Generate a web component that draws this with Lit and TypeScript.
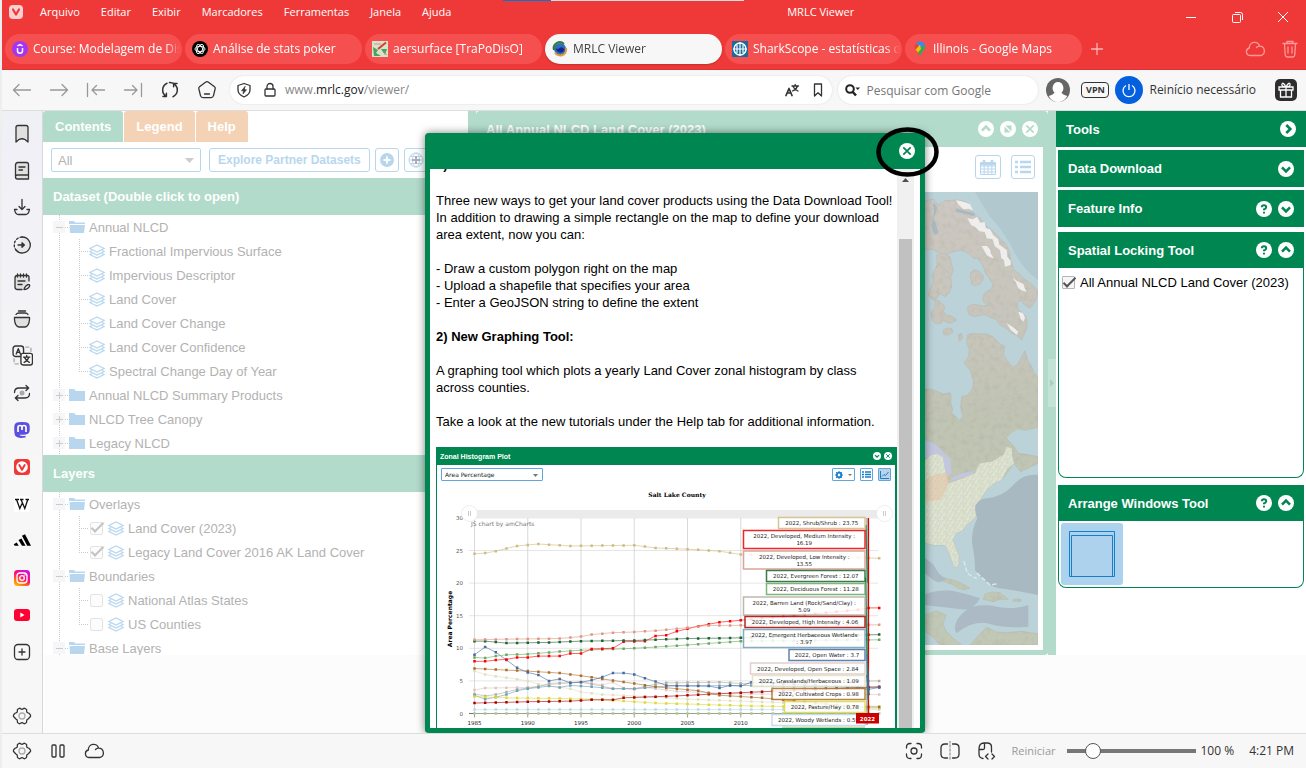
import { LitElement, html, svg, css } from "lit";
import { customElement, property } from "lit/decorators.js";
import { classMap } from "lit/directives/class-map.js";

const stroke = (body: unknown, size = 20, box = 20) => html`<svg
  width=${size} height=${size} viewBox="0 0 ${box} ${box}" fill="none"
  stroke="currentColor" stroke-width="1.3" stroke-linecap="round"
  stroke-linejoin="round" aria-hidden="true">${body}</svg>`;

const gear = svg`<path d="M7 2.500q1-.6 1.700.3Q10 4 11.300 2.800 12 1.900 13 2.500l1.200.8q.8.6.4 1.600-.3 1.600 1.400 2 1.200.1 1.600 1l.9 1.300q.4.800-.3 1.500Q17 12 16 13.100q-1.600.4-1.400 2 .4 1-.4 1.600l-1.200.8q-1 .6-1.700-.3-1.300-1.200-2.600 0-.7.900-1.700.3l-1.200-.8q-.8-.6-.4-1.600.2-1.600-1.400-2Q3 12 1.800 10.700q-.7-.7-.3-1.500l.9-1.300q.4-.9 1.600-1 1.700-.4 1.400-2-.4-1 .4-1.600z"/><circle cx="10" cy="10" r="3" stroke="#aaa"/>`;
const cloud = svg`<path d="M5 16.500a3.800 3.800 0 0 1-.6-7.500A5.200 5.200 0 0 1 14.600 7.200a4.700 4.700 0 0 1 1 9.300zM11.500 8.500a4 4 0 0 1 3-1.300" />`;

const railIcons: Array<[string, unknown]> = [
  ["Favoritos", stroke(svg`<path fill="#e0e0e0" d="M4 3.500Q4 1.500 6 1.500h8q2 0 2 2V18l-3-2.500q-3-1.500-6 0L4 18z"/>`)],
  ["Lista de leitura", stroke(svg`<path fill="#e0e0e0" d="M3.500 15.500V4q0-2.500 2.500-2.500h8.500q2 0 2 2V14H5.500a1.700 1.700 0 0 0 0 4h11V14M7 6h6M7 9h3.500"/>`)],
  ["Downloads", stroke(svg`<path d="M10 1.500V11M7 8.500l3 3 3-3M2.500 11.500c.5 3 2 5 4 5h7c2 0 3.500-2 4-5H15M2.500 11.500H5"/>`)],
  ["Histórico", stroke(svg`<path fill="#e8e8e8" d="M10 2a8 8 0 1 1-6 13"/><path stroke-dasharray="2 2" d="M10 2a8 8 0 0 0-6 13"/><path d="M6 10h6M10 7.800l2.400 2.200-2.400 2.200z" fill="currentColor"/>`)],
  ["Anotações", stroke(svg`<path fill="#e0e0e0" d="M17 9V5q0-1.500-1.500-1.500h-10Q3 3.500 3 6v9q0 2.500 2.500 2.500H10"/><path d="M5.500 2v3M8.500 2v3M11.500 2v3M14.500 2v3M6 9h7M6 12.500h4M12 17.500c0-2 3-5 4.500-5s1.800 1.500 0 3.200-4.500 1.800-4.500 1.800"/>`)],
  ["Sessões", stroke(svg`<path fill="#e0e0e0" d="M2.500 8.500h15v2q-.5 7-4.500 7.500H7q-4-.5-4.500-7.500z"/><path d="M4 5.500q1-1.500 3-1.500h6q2 0 3 1.500M6.500 2h7"/>`)],
  ["Tradutor", stroke(svg`<rect x="1" y="1" width="10" height="10" rx="2.500"/><path d="M4 8.500 6 3.500l2 5M4.700 7h2.600"/><path fill="#f7f7f7" d="M10.500 8h7a2 2 0 0 1 2 2v7a2 2 0 0 1-2 2h-7a2 2 0 0 1-2-2v-7q0-2 2-2z"/><path d="M11 11.500h6M14 10v1.500M16 11.500q-1 3.500-4.500 5M12 12q1.500 3 4.500 4.500"/><path stroke="#aaa" stroke-dasharray="3 3" d="M13 2h5v4M2 13v5h5"/>`, 21)],
  ["Sincronizar", stroke(svg`<path d="M2.500 9.500Q2.500 5 7 5h9.500M14 2.500 16.700 5 14 7.500M17.500 10.500q0 4.500-4.500 4.500H3.500M6 12.500 3.300 15 6 17.500"/><circle cx="10" cy="10" r="2.500" fill="#aaa" stroke="none"/>`)],
  ["Mastodon", html`<svg width="16" height="16" viewBox="0 0 16 16" aria-hidden="true"><path fill="#5b4fe0" d="M4 .3q4-.6 8 0 3.500.7 3.700 4v4q-.3 3.700-4 4.200-3.600.5-6-.1.200 2.200 5.800 1.400v1.600q-8 1.600-10.500-2Q0 11 .3 4.300.6 1 4 .3z"/><path fill="none" stroke="#fff" stroke-width="1.700" d="M4 10V5.500Q4 3.500 6 3.500t2 2V8M8 5.500q0-2 2-2t2 2V10"/></svg>`],
  ["Vivaldi", html`<svg width="16" height="16" viewBox="0 0 16 16" aria-hidden="true"><rect width="16" height="16" rx="3.500" fill="#ef3939"/><circle cx="8" cy="8" r="5.800" fill="#fff"/><path d="M5.300 6 8 10.700 10.700 6" fill="none" stroke="#ef3939" stroke-width="2" stroke-linecap="round" stroke-linejoin="round"/></svg>`],
  ["Wikipedia", html`<svg width="16" height="16" viewBox="0 0 16 16" aria-hidden="true"><rect width="16" height="16" rx="2" fill="#fff"/><path d="M1 3.500h4M6 3.500h3.500M11.500 3.500h3.500M2.500 3.500l3.300 9L8 7.500M7 3.500l3.800 9L13.800 3.500" fill="none" stroke="#111" stroke-width="1.300"/></svg>`],
  ["Adidas", html`<svg width="18" height="14" viewBox="0 0 18 14" aria-hidden="true"><path d="m9 1.800 3-1.600 6 11.500h-3.800zM5.500 6l3-1.500 4 7.200H9zM.8 10.200 3.700 8.500l2 3.200H1.700z"/></svg>`],
  ["Instagram", html`<svg width="16" height="16" viewBox="0 0 16 16" aria-hidden="true"><defs><linearGradient id="ig" x1=".1" y1="1" x2=".7" y2="0"><stop stop-color="#ffc400"/><stop offset=".3" stop-color="#ff6a1a"/><stop offset=".6" stop-color="#ff0a78"/><stop offset="1" stop-color="#c913e0"/></linearGradient></defs><rect width="16" height="16" rx="3.500" fill="url(#ig)"/><rect x="3" y="3" width="10" height="10" rx="3" fill="none" stroke="#fff" stroke-width="1.300"/><circle cx="8" cy="8" r="2.300" fill="none" stroke="#fff" stroke-width="1.300"/><circle cx="11" cy="5" r=".8" fill="#fff"/></svg>`],
  ["YouTube", html`<svg width="16" height="12" viewBox="0 0 16 12" aria-hidden="true"><rect width="16" height="12" rx="3" fill="#ff0033"/><path d="M6.300 3.500v5L10.500 6z" fill="#fff"/></svg>`],
  ["Adicionar painel", stroke(svg`<rect x="2.500" y="2.500" width="15" height="15" rx="3.500"/><path d="M10 7v6M7 10h6"/>`)],
];

interface Tab { title: string; icon: unknown; active?: boolean }
const tabs: Tab[] = [
  { title: "Course: Modelagem de Disp", icon: svg`<circle cx="8" cy="8" r="8" fill="#a435f0"/><path d="M5.500 7v3q0 2.200 2.500 2.200t2.500-2.200V7M5.500 4.800 8 3.500l2.500 1.300" fill="none" stroke="#fff" stroke-width="1.500"/>` },
  { title: "Análise de stats poker", icon: svg`<circle cx="8" cy="8" r="8"/><g fill="none" stroke="#fff" stroke-width=".9"><ellipse cx="8" cy="8" rx="5" ry="2.600"/><ellipse cx="8" cy="8" rx="5" ry="2.600" transform="rotate(60 8 8)"/><ellipse cx="8" cy="8" rx="5" ry="2.600" transform="rotate(120 8 8)"/></g>` },
  { title: "aersurface [TraPoDisO]", icon: svg`<rect width="16" height="16" fill="#d9e2c8"/><path d="M1 6 6 9l-2 3 5 3H2zM9 8h6l-2 6z" fill="#49a260"/><path d="M2 3h7M11 11l4 3" stroke="#b99" /><path d="M6 8 14 1.500" stroke="#d3402e" stroke-width="2"/>` },
  { title: "MRLC Viewer", active: true, icon: svg`<circle cx="8" cy="8" r="6" fill="#2e6fc0"/><path d="M3.500 7q2 2 4 0t5 1q-1 4-4.500 3.500T3.500 7z" fill="#14288c"/><path d="M2 9a6 6 0 0 1 10-6" fill="none" stroke="#2f7d3a" stroke-width="2"/><path d="M14 7a6 6 0 0 1-11 4.500" fill="none" stroke="#e29a3c" stroke-width="2"/>` },
  { title: "SharkScope - estatísticas de", icon: svg`<rect width="16" height="16" fill="#176b9e"/><circle cx="8" cy="8" r="6" fill="none" stroke="#fff" stroke-width="1.500"/><path d="M8 1v14M1 8h14M5 4v8M11 4v8" stroke="#fff" stroke-width="1.200"/>` },
  { title: "Illinois - Google Maps", icon: svg`<path d="M8 .5a5.200 5.200 0 0 1 5.200 5.200C13.200 9.500 9 10.500 8 15.500 7 10.500 2.800 9.500 2.800 5.700A5.200 5.200 0 0 1 8 .5z" fill="#34a853"/><path d="M8 .5a5.200 5.200 0 0 1 5 3.700L8 6 4 2.400A5 5 0 0 1 8 .5z" fill="#4285f4"/><path d="M4 2.400 7 5 4 9Q1.500 5.500 4 2.400z" fill="#ea4335"/><path d="M3.600 8.500 8 3.800 9 8l-3 3.500z" fill="#fbbc04"/>` },
];

type Glyph = "up" | "down" | "right" | "close" | "help" | "resize";
const glyphs: Record<Glyph, unknown> = {
  up: svg`<path d="m4 9.700 4-4 4 4"/>`,
  down: svg`<path d="m4 6.300 4 4 4-4"/>`,
  right: svg`<path d="m6.300 4 4 4-4 4"/>`,
  close: svg`<path stroke-width="1.700" d="m4.300 4.300 7.400 7.400M11.700 4.300l-7.400 7.400"/>`,
  help: svg`<path stroke-width="2" d="M5.800 6.300q0-2 2.200-2t2.200 1.900Q10.200 7.500 8 8.500v.8M8 10.800v1.700"/>`,
  resize: svg`<path stroke="none" fill="currentColor" d="M4.500 5.500v6h6zM11.500 10.500v-6h-6z"/>`,
};
const round = (g: Glyph, label: string) => html`<button class="round" aria-label=${label}>
  <svg viewBox="0 0 16 16" aria-hidden="true"><circle cx="8" cy="8" r="8" fill="#fff"/><g fill="none" stroke="currentColor" stroke-width="2.600">${glyphs[g]}</g></svg></button>`;

const roundStyle = css`
  button { font: inherit; color: inherit; background: none; border: 0; padding: 0; margin: 0; }
  .round { width: 16px; height: 16px; color: var(--glyph, #008751); display: block; flex: none; }
  .round svg { display: block; width: 100%; height: 100%; }
`;

/* ---------- Zonal histogram ---------- */

const FIRST = 1985;
const LAST = 2023;
const px = (year: number) => 77 + (year - FIRST) * 21.3;
const py = (v: number) => 497 - v * 13.04;

const series: Array<[string, Array<[number, number]>]> = [
  ["#b5c58f", [[1985, 0], [2023, 0]]],
  ["#b8d9eb", [[1985, 0.6], [2023, 0.6]]],
  ["#dfdfc2", [[1985, 6.5], [1986, 6], [1987, 5.7], [1988, 5.5], [1990, 5], [1991, 4.5], [1994, 3.8], [1995, 3.3], [1997, 2.9], [2000, 2.7], [2005, 2.2], [2010, 1.9], [2023, 1.1]]],
  ["#dec5c5", [[1985, 3.6], [1986, 3.9], [1990, 4], [1992, 4.4], [1995, 4.9], [1997, 4.4], [1998, 4.8], [1999, 3.9], [2000, 3.7], [2001, 4], [2004, 3.4], [2010, 3], [2023, 2.9]]],
  ["#b3ac9f", [[1985, 3], [1986, 2.7], [1987, 2.9], [1989, 3.7], [1991, 4.1], [1992, 4.6], [1995, 4.8], [1997, 4.2], [1998, 3.8], [2000, 3.8], [2002, 4.5], [2003, 4.7], [2008, 4.8], [2010, 4.6], [2023, 5]]],
  ["#6c9fb8", [[1985, 2.8], [1986, 2.2], [1987, 2.5], [1988, 2.9], [1989, 3.5], [1990, 3.8], [1992, 4.2], [1993, 4], [1994, 4.3], [1996, 4.1], [1998, 3.8], [2000, 3.8], [2003, 4.2], [2010, 4.3], [2023, 4]]],
  ["#dcd939", [[1985, 2.6], [1988, 2.4], [1993, 2.3], [1996, 2.2], [1998, 2], [2000, 1.8], [2002, 1.6], [2004, 1.5], [2010, 1.2], [2023, 0.8]]],
  ["#ab0000", [[1985, 1.6], [1990, 1.8], [1994, 1.9], [1996, 2.1], [1998, 2.1], [1999, 2.4], [2004, 2.7], [2010, 3.2], [2023, 4.1]]],
  ["#ab6c28", [[1985, 6.9], [1990, 6.5], [1993, 6.2], [1995, 5.8], [1997, 5.3], [2000, 4.6], [2002, 4.1], [2004, 3.8], [2006, 3.5], [2008, 2.8], [2010, 2.6], [2012, 2.4], [2021, 1], [2023, 1]]],
  ["#466b9f", [[1985, 9], [1986, 10.2], [1987, 9.4], [1988, 8.2], [1989, 7], [1990, 6.3], [1991, 5.9], [1992, 5], [1993, 5.3], [1994, 4.7], [1995, 4.8], [1996, 5.1], [1997, 5.6], [1998, 6.2], [1999, 6.2], [2000, 6], [2001, 5.4], [2002, 4.9], [2003, 4.3], [2007, 4.2], [2008, 3.9], [2009, 4.3], [2010, 4.2], [2011, 4.8], [2021, 4], [2022, 3.7], [2023, 4]]],
  ["#68aa63", [[1985, 8.6], [1986, 8.5], [1987, 8.8], [1988, 9], [1990, 9.1], [1993, 9.5], [1995, 9.7], [2000, 10], [2004, 10.4], [2010, 11.1], [2023, 11.3]]],
  ["#ff0000", [[1985, 8], [1986, 8], [1987, 8.2], [1988, 8.3], [1989, 8.6], [1990, 8.6], [1991, 8.8], [1993, 8.8], [1994, 9.2], [1995, 9.2], [1996, 9.9], [1998, 10], [1999, 11], [2001, 11.1], [2002, 11.9], [2003, 12], [2004, 12.6], [2005, 13], [2006, 13.4], [2008, 14], [2010, 14.3], [2021, 15.9], [2022, 16.2], [2023, 16.2]]],
  ["#1c6330", [[1985, 11.1], [1986, 11.1], [1988, 10.8], [1992, 10.9], [1995, 11.1], [2000, 11.2], [2005, 11.5], [2010, 11.6], [2023, 12.1]]],
  ["#dd9787", [[1985, 11.3], [1988, 11.4], [1993, 11.5], [1995, 11.8], [1996, 12.1], [1998, 12.4], [2000, 12.5], [2002, 12.7], [2004, 13], [2007, 13.5], [2023, 13.6]]],
  ["#d1bb82", [[1985, 24.5], [1986, 24.6], [1987, 24.9], [1988, 25.3], [1989, 25.7], [1991, 26], [1994, 25.7], [2000, 25.8], [2002, 25.4], [2005, 25.2], [2008, 24.9], [2010, 24.4], [2023, 23.8]]],
];

const sample = (keys: Array<[number, number]>) => {
  const out: Array<[number, number]> = [];
  for (let year = FIRST; year <= LAST; year++) {
    const i = Math.max(1, keys.findIndex(([k]) => k >= year));
    const [x0, y0] = keys[i - 1];
    const [x1, y1] = keys[i];
    out.push([px(year), py(y0 + ((y1 - y0) * (year - x0)) / (x1 - x0))]);
  }
  return out;
};

/* colour, left edge, top edge, lines of text */
const balloons: Array<[string, number, number, string[]]> = [
  ["#d1bb82", 685, 105, ["2022, Shrub/Shrub : 23.75"]],
  ["#eb0000", 615, 131, ["2022, Developed, Medium Intensity :", "16.19"]],
  ["#d99282", 615, 172, ["2022, Developed, Low Intensity :", "13.55"]],
  ["#1c6330", 661, 211, ["2022, Evergreen Forest : 12.07"]],
  ["#68aa63", 661, 237, ["2022, Deciduous Forest : 11.28"]],
  ["#b3ac9f", 615, 264, ["2022, Barren Land (Rock/Sand/Clay) :", "5.09"]],
  ["#ab0000", 618, 303, ["2022, Developed, High Intensity : 4.06"]],
  ["#6c9fb8", 615, 329, ["2022, Emergent Herbaceous Wetlands", ": 3.97"]],
  ["#466b9f", 706, 369, ["2022, Open Water : 3.7"]],
  ["#dec5c5", 629, 396, ["2022, Developed, Open Space : 2.84"]],
  ["#dfdfc2", 633, 421, ["2022, Grasslands/Herbaceous : 1.09"]],
  ["#ab6c28", 672, 447, ["2022, Cultivated Crops : 0.98"]],
  ["#dcd939", 697, 473, ["2022, Pasture/Hay : 0.78"]],
  ["#b8d9eb", 672, 499, ["2022, Woody Wetlands : 0.59"]],
];

@customElement("zonal-plot")
export class ZonalPlot extends LitElement {
  static styles = [roundStyle, css`
    :host { display: block; background: #fff; border: solid #008751; border-width: 0 2px 0 1px; font: 7px "Liberation Sans", Arial, sans-serif; }
    .head { display: flex; align-items: center; gap: 3px; height: 18px; padding: 0 3px; background: #008751; color: #fff; font-weight: 700; }
    .head span { flex: 1; }
    .head .round { width: 8px; height: 8px; }
    .bar { display: flex; align-items: center; gap: 5px; padding: 3px 4px; }
    .pick { position: relative; display: flex; margin-right: auto; }
    .pick select { appearance: none; width: 102px; height: 13px; border: 1px solid #5fa6dc; border-radius: 1px; background: #fff; padding: 0 3px; font: 6px "DejaVu Sans", sans-serif; color: #222; }
    .pick svg { position: absolute; right: 5px; top: 6px; }
    .tool { height: 13px; width: 13px; border: 1px solid #5fa6dc; border-radius: 1px; display: flex; align-items: center; justify-content: center; gap: 5px; color: #157fcc; }
    .wide { width: 23px; }
    .on { background: #bcd3e6; }
    .plot { display: block; width: 100%; height: auto; font: 11px "DejaVu Sans", sans-serif; }
    .plot .name { font-weight: 700; font-size: 12px; }
    .plot .title { font-weight: 700; font-size: 12px; font-family: "DejaVu Serif", serif; }
  `];

  render() {
    const years = [1985, 1990, 1995, 2000, 2005, 2010];
    const values = [0, 5, 10, 15, 20, 25, 30];
    return html`
      <div class="head"><span>Zonal Histogram Plot</span>${round("down", "Collapse plot")}${round("close", "Close plot")}</div>
      <div class="bar">
        <label class="pick"><select aria-label="Plot value"><option>Area Percentage</option></select>
          <svg width="5" height="3" viewBox="0 0 5 3" aria-hidden="true"><path d="M0 0h5L2.500 3z" fill="#777"/></svg></label>
        <button class="tool wide" aria-label="Options"><svg width="8" height="8" viewBox="0 0 8 8"><circle cx="4" cy="4" r="2.300" fill="none" stroke="currentColor" stroke-width="1.800"/><path d="M4 0v8M0 4h8M1 1l6 6M7 1 1 7" stroke="currentColor" stroke-width=".9"/><circle cx="4" cy="4" r="1.200" fill="#fff"/></svg><svg width="4" height="2" viewBox="0 0 4 2"><path d="M0 0h4L2 2z" fill="#777"/></svg></button>
        <button class="tool" aria-label="Table"><svg width="9" height="7" viewBox="0 0 9 7"><path d="M0 1h2M3 1h6M0 3.500h2M3 3.500h6M0 6h2M3 6h6" stroke="currentColor" stroke-width="1.400"/></svg></button>
        <button class="tool on" aria-label="Chart"><svg width="9" height="8" viewBox="0 0 9 8"><path d="M.5 0v7.500H9M2 5.500l2-2 1.500 1L8.500 1" fill="none" stroke="currentColor"/></svg></button>
      </div>
      <svg class="plot" viewBox="2 38 916 488" role="img" aria-label="Salt Lake County land cover, area percentage by year">
        <text class="title" x="482" y="64" text-anchor="middle">Salt Lake County</text>
        ${values.map((v) => svg`<path d="M66 ${py(v)}H884" stroke=${v ? "#ddd" : "#444"} stroke-width="1.500"/><text x="54" y=${py(v) + 4} text-anchor="end" fill="#555">${v}</text>`)}
        ${years.map((y) => svg`<path d="M${px(y)} 106V497" stroke="#ccc" stroke-width="1.500"/><path d="M${px(y)} 497v8" stroke="#444"/><text x=${px(y)} y="519" text-anchor="middle" fill="#222">${y}</text>`)}
        <text x="70" y="121" fill="#777" font-size="12">JS chart by amCharts</text>
        <text class="name" transform="translate(31 308) rotate(-90)" text-anchor="middle">Area Percentage</text>
        ${series.map(([color, keys]) => {
          const pts = sample(keys);
          return svg`<polyline points=${pts.map((p) => p.map((n) => n.toFixed(1)).join(",")).join(" ")} fill="none" stroke=${color} stroke-width="1.500" opacity=".8"/>
            <path d=${pts.map(([x, y]) => `M${(x - 2.5).toFixed(1)} ${(y - 2.5).toFixed(1)}h5v5h-5z`).join("")} fill=${color}/>`;
        })}
        <rect x="68" y="90" width="832" height="16" fill="#ebebeb"/>
        ${[67, 897].map((x) => svg`<circle cx=${x} cy="97" r="16" fill="#fff" stroke="#ddd"/><path d="M${x - 2} 92v10M${x + 2} 92v10" stroke="#999"/>`)}
        <path d="M862 106V520" stroke="#777" stroke-width="2"/>
        <path d="M865 106V497" stroke="#e00000" stroke-width="2.500"/>
        <path d="M860 120 863 235M859 225 864 440M860 290l4 180" stroke="#2f8a55" stroke-width="2.500"/>
        <path d="M862 380 866 450M861 420l6 40" stroke="#466b9f" stroke-width="2"/>
        <rect x="692" y="523" width="166" height="10" fill="#c8d6a8"/>
        ${balloons.map(([color, x, y, lines]) => {
          const mid = (x + 858) / 2;
          return svg`<rect x=${x} y=${y} width=${858 - x} height=${lines.length > 1 ? 36 : 22} fill="#fff" fill-opacity=".85" stroke=${color} stroke-width="3" stroke-opacity=".85"/>
            ${lines.map((t, i) => svg`<text x=${mid} y=${y + 15 + i * 14} text-anchor="middle" fill="#222">${t}</text>`)}`;
        })}
        <rect x="840" y="496" width="46" height="21" fill="#c00"/>
        <text x="863" y="511" text-anchor="middle" fill="#fff" font-weight="700">2022</text>
      </svg>`;
  }
}

/* ---------- Layer tree ---------- */

interface Node { label: string; state?: "open" | "closed"; check?: boolean }

const folder = (open: boolean) => html`<svg width="16" height="12" viewBox="0 0 16 12" aria-hidden="true">${open
  ? svg`<path d="M0 0h5l1 1.500h10V3H0zM.5 4H16L15 12H1z" fill="#b8d7ef"/>`
  : svg`<path d="M0 0h5l2 2h9v10H0z" fill="#b8d7ef"/>`}</svg>`;
const layers = html`<svg width="16" height="15" viewBox="0 0 16 15" fill="none" stroke="#b8d7ef" stroke-width="1.300" aria-hidden="true"><path d="M8 1 15 4.500 8 8 1 4.500zM3 6.500l-2 1L8 11l7-3.500-2-1M3 9.500l-2 1L8 14l7-3.500-2-1"/></svg>`;

@customElement("layer-tree")
export class LayerTree extends LitElement {
  @property({ attribute: false }) nodes: Node[] = [];

  static styles = css`
    :host { display: block; background: #fff; color: #b2b2b2; }
    .row { display: flex; align-items: center; height: 24px; padding-left: 10px; white-space: nowrap; }
    .row svg { margin-right: 4px; flex: none; }
    .stem { width: 16px; height: 24px; display: flex; align-items: center; flex: none;
      background: repeating-linear-gradient(#ccc 0 1px, transparent 1px 2px) 6px 0 / 1px 100% no-repeat,
        repeating-linear-gradient(90deg, #ccc 0 1px, transparent 1px 2px) 6px 12px / 10px 1px no-repeat; }
    .pass { background: repeating-linear-gradient(#ccc 0 1px, transparent 1px 2px) 6px 0 / 1px 100% no-repeat; }
    .branch { width: 20px; background: repeating-linear-gradient(#ccc 0 1px, transparent 1px 2px) 10px 0 / 1px 100% no-repeat,
        repeating-linear-gradient(90deg, #ccc 0 1px, transparent 1px 2px) 10px 12px / 9px 1px no-repeat; }
    .last { background-size: 1px 12px, 9px 1px; }
    .toggle { width: 12px; height: 12px; border: 0; padding: 0; background: linear-gradient(#ccc, #ccc) center / 7px 1px no-repeat, #f6f6f8; }
    .plus { background: linear-gradient(#ccc, #ccc) center / 7px 1px no-repeat, linear-gradient(#ccc, #ccc) center / 1px 7px no-repeat, #f6f6f8; }
    label { display: flex; align-items: center; }
    .tick { appearance: none; box-sizing: border-box; width: 13px; height: 13px; margin: 0 5px 0 1px; border: 1px solid #e3e3e3; border-radius: 2px; background: #fcfcfc; display: flex; align-items: center; justify-content: center; }
    .tick:checked::after { content: ""; flex: none; width: 11px; height: 4px; border: solid #c4c4c4; border-width: 0 0 2px 2px; transform: translate(1px, -2px) rotate(-45deg); }
  `;

  render() {
    return this.nodes.map((n, i) => {
      if (n.state) {
        return html`<div class="row"><span class="stem"><button class=${classMap({ toggle: true, plus: n.state === "closed" })} aria-label="Toggle ${n.label}"></button></span>${folder(n.state === "open")}<span>${n.label}</span></div>`;
      }
      const next = this.nodes[i + 1];
      return html`<div class="row"><span class="stem pass"></span><span class=${classMap({ stem: true, branch: true, last: !next || !!next.state })}></span>${n.check === undefined
        ? html`${layers}<span>${n.label}</span>`
        : html`<label><input class="tick" type="checkbox" .checked=${n.check}>${layers}${n.label}</label>`}</div>`;
    });
  }
}

/* ---------- Map ---------- */

const map = html`<svg class="map" viewBox="105 6 339 1359" role="img" aria-label="Land cover map of eastern North America">
  <defs>
    <pattern id="nlcd" width="26" height="22" patternUnits="userSpaceOnUse">
      <rect width="26" height="22" fill="#dbe2d2"/>
      <path fill="#bfdcc0" d="M0 0h4v3h-4zM9 5h5v3h-5zM18 12h4v4h-4zM3 14h4v3h-4zM20 1h3v3h-3zM12 18h4v3h-4z"/>
      <path fill="#f0ecc0" d="M5 4h4v4h-4zM15 9h3v3h-3zM22 17h4v3h-4zM0 10h3v3h-3z"/>
      <path fill="#eebfb4" d="M13 1h3v3h-3zM7 11h3v3h-3zM22 7h3v3h-3zM7 18h2v3h-2z"/>
      <path fill="#c4cce4" d="M16 15h2v3h-2zM1 6h2v2h-2zM11 13h3v2h-3z"/>
    </pattern>
    <linearGradient id="land" gradientUnits="userSpaceOnUse" x1="0" y1="0" x2="0" y2="1365"><stop stop-color="#cdc8c2"/><stop offset=".35" stop-color="#c6c5ba"/><stop offset=".5" stop-color="#c0c4b3"/><stop offset="1" stop-color="#c1c8b6"/></linearGradient>
    <filter id="grain" x="0" y="0" width="100%" height="100%"><feTurbulence type="fractalNoise" baseFrequency=".06" numOctaves="4"/><feColorMatrix values="0 0 0 0 .35  0 0 0 0 .33  0 0 0 0 .28  1.600 0 0 0 -.72"/><feComposite in2="SourceGraphic" operator="in"/></filter>
  </defs>
  <path fill="#bad2d8" d="M105 6h339v1359H105z"/>
  <path fill="#b0c8ce" d="M255 6H444V270Q400 240 370 180T300 80z"/>
  <g id="ground" fill="url(#land)" stroke="#b8b6ae" stroke-width="1.500">
    <path d="M105 32 130 28 145 45 165 32 200 30 225 34 240 45 248 66 262 80 278 92 290 110 308 122 325 140 345 160 358 185 362 212 372 240 386 250 400 265 422 280 444 302 438 330 420 355 404 345 392 330 382 340 385 360 400 370 410 385 412 410 395 450 380 436 365 430 348 414 330 405 318 388 300 382 286 374 270 376 252 380 235 372 233 350 248 343 265 345 280 348 295 345 282 336 278 325 282 312 290 305 302 298 310 285 300 268 288 252 280 230 272 215 262 205 250 204 235 190 212 180 190 185 170 192 150 190 128 178 105 178z"/>
    <path d="M140 195 158 190 180 200 184 222 190 240 182 262 185 290 178 308 165 320 150 310 140 326 130 330 116 318 118 300 130 275 128 250 142 225z"/>
    <path d="M135 330 150 334 165 350 160 364 170 375 184 378 200 390 180 400 160 392 150 402 135 400 126 388 122 370 134 352zM160 420l12-6 13 1 4 11-15 10-13-2zM205 435l10-5 3 15-10 10zM240 250l12-10 13 2 15 15-2 14-8 11-16 6-9-6z"/>
    <path d="M105 597 125 598 145 605 160 612 180 608 184 625 182 640 188 656 185 670 196 678 208 692 218 680 212 650 215 620 232 616 245 600 250 585 250 570 240 540 222 520 236 500 238 480 230 460 232 435 250 430 270 432 290 432 310 440 325 458 345 470 340 490 350 510 370 532 385 520 392 505 405 482 412 510 425 530 432 548 444 560V712L400 722 350 745 372 770 385 790 420 795 444 800V820L392 845 372 820 335 870 312 880 290 900 278 918 262 945 265 965 255 985 235 1000 218 1020 200 1030 188 1050 198 1075 207 1100 205 1130 192 1130 178 1090 165 1065 130 1065 105 1058z"/>
    <path d="M105 1275 140 1262 168 1275 160 1300 165 1320 190 1345 215 1365H150L128 1340 105 1325zM240 1365 262 1340 290 1312 320 1326 350 1328 395 1324 444 1332V1365zM140 1168 165 1164 190 1170 215 1180 240 1195 222 1199 205 1195 188 1184 165 1175zM285 1212 305 1206 330 1208 355 1228 330 1228 310 1235 280 1228zM370 1228h22v6h-22z"/>
  </g>
  <use href="#ground" filter="url(#grain)" opacity=".3"/>
  <path fill="#a9babf" d="M128 40Q148 45 138 68T132 90 145 130L135 135Q120 115 128 90T128 40zM198 55 255 70 252 78 198 66z"/>
  <path fill="#f4f5f5" d="M198 30 222 36 240 42 250 62 236 56 220 58 206 44zM232 85 248 88 262 80 270 98 284 96 288 114 300 118 310 136 325 148 328 164 350 180 352 200 362 212 362 225 345 230 342 210 334 205 330 180 314 168 308 148 290 145 284 126 268 124 255 110 244 106zM275 168 290 168 300 178 302 190 312 205 300 202 290 195zM368 262 380 272 400 282 404 294 410 305 398 302 385 295 378 278zM385 365l14 4 6 14-5 12-8-8zM350 400l20 12 15 13-5 10-18-16z" opacity=".85"/>
  <path fill="#bad2d8" d="M350 745 365 728 385 718 410 724 444 725V765L415 790 385 788 400 760 372 758z"/>
  <path fill="#c3c7de" d="M105 750Q140 760 155 780T182 805L185 850 165 865Q165 830 158 815T130 800L105 805zM168 878 200 855 225 848 255 842 245 855 200 868z"/>
  <path fill="url(#nlcd)" d="M105 810 125 795 142 792 158 800 165 840 175 880 215 866 255 850 262 834 270 820 305 815 340 795 350 770 365 775 366 798 372 820 352 838 335 870 312 880 290 900 278 918 262 945 265 965 255 985 235 1000 218 1020 200 1030 188 1050 198 1075 207 1100 205 1130 192 1130 178 1090 165 1065 130 1065 105 1058z"/>
  <path fill="#e6bfa0" opacity=".5" d="M105 870Q130 850 160 850T172 890 150 930L105 935z"/>
  <path fill="#a9b9c1" d="M444 855Q400 850 370 885T290 925 262 985Q240 1030 248 1070T255 1140Q290 1190 330 1195T444 1215z"/>
  <path fill="#abbac4" d="M105 1105Q130 1120 140 1140T170 1165Q150 1185 130 1170T105 1150zM105 1212Q160 1196 200 1205T270 1225Q250 1262 215 1258T105 1245zM235 1255Q270 1240 320 1250T415 1245V1310Q350 1316 300 1302T200 1330Q180 1300 235 1255z"/>
  <path fill="none" stroke="#d0e8ec" stroke-width="5" stroke-linecap="round" stroke-dasharray="10 10" d="M222 1115 232 1150 258 1165M262 1150 300 1185 318 1182"/>
</svg>`;

/* ---------- Page ---------- */

const datasets: Node[] = [
  { label: "Annual NLCD", state: "open" },
  { label: "Fractional Impervious Surface" },
  { label: "Impervious Descriptor" },
  { label: "Land Cover" },
  { label: "Land Cover Change" },
  { label: "Land Cover Confidence" },
  { label: "Spectral Change Day of Year" },
  { label: "Annual NLCD Summary Products", state: "closed" },
  { label: "NLCD Tree Canopy", state: "closed" },
  { label: "Legacy NLCD", state: "closed" },
];
const active: Node[] = [
  { label: "Overlays", state: "open" },
  { label: "Land Cover (2023)", check: true },
  { label: "Legacy Land Cover 2016 AK Land Cover", check: true },
  { label: "Boundaries", state: "open" },
  { label: "National Atlas States", check: false },
  { label: "US Counties", check: false },
  { label: "Base Layers", state: "open" },
];

@customElement("mrlc-viewer")
export class MrlcViewer extends LitElement {
  static styles = [roundStyle, css`
    :host { display: flex; flex-direction: column; position: relative; background: #fcfcfc; font: 13px/17px "Liberation Sans", Arial, sans-serif; color: #000; overflow: hidden; --dim: #b2dbcb; --sky: #b8d7ef; }
    .viewer { flex: 1; display: flex; min-height: 0; margin-bottom: 78px; }
    .side { width: 425px; background: #fff; overflow: hidden; }
    .tabs { display: flex; gap: 1px; height: 31px; }
    .tabs button { padding: 0 12px; background: #f4d2b6; color: #fff; font-weight: 700; border-radius: 3px 3px 0 0; }
    .tabs .current { background: var(--dim); }
    .filter { display: flex; gap: 5px; padding: 6px 8px; height: 36px; box-sizing: border-box; }
    .pick { position: relative; display: flex; margin-right: 3px; }
    .pick select { appearance: none; width: 150px; font: inherit; color: #b2b2b2; background: #fff; border: 1px solid var(--sky); border-radius: 2px; padding: 0 6px; }
    .pick svg { position: absolute; right: 7px; top: 10px; }
    .outline { box-sizing: border-box; height: 24px; min-width: 24px; border: 1px solid var(--sky); border-radius: 3px; color: var(--sky); font-weight: 700; display: flex; align-items: center; justify-content: center; flex: none; }
    .partner { padding: 0 8px; font-size: 12px; }
    .band { margin: 0; height: 37px; padding: 0 10px; display: flex; align-items: center; background: var(--dim); color: #fff; font-size: 13px; font-weight: 700; }
    .split { width: 8px; background: var(--dim); display: flex; align-items: center; flex: none; }
    .grip { width: 8px; height: 48px; background: #c3e3d7; display: flex; align-items: center; justify-content: center; }
    .window { flex: 1; display: flex; flex-direction: column; min-width: 0; border: solid var(--dim); border-width: 0 5px 5px; border-radius: 4px; --glyph: #b2dbcb; background: #fff; overflow: hidden; }
    .window header { display: flex; align-items: center; gap: 6px; height: 36px; padding: 0 5px; background: var(--dim); color: #fff; font-weight: 700; flex: none; }
    .window header span { flex: 1; }
    .tools-row { display: flex; justify-content: flex-end; gap: 10px; padding: 8px 8px 13px; }
    .date { width: 26px; }
    .cover { flex: 1; min-height: 0; margin: 0 5px 5px; background: #bad2d8; display: flex; justify-content: flex-end; }
    .map { height: 100%; width: auto; display: block; }
    .tools { width: 250px; background: #fff; }
    .tools h2 { margin: 0 0 3px; height: 36px; display: flex; align-items: center; justify-content: space-between; padding: 0 10px; background: #008751; color: #fff; font-size: 13px; font-weight: 700; }
    .tools .stack { display: flex; flex-direction: column; gap: 3px; padding: 0 2px; }
    .tools h3 { margin: 0; height: 37px; display: flex; align-items: center; gap: 6px; padding: 0 10px; background: #008751; color: #fff; font-size: 13px; font-weight: 700; }
    .tools h3 span { flex: 1; }
    .box { border: 1px solid #008751; border-top: 0; border-radius: 0 0 8px 8px; }
    .panel { margin-top: 2px; }
    .panel + .panel { margin-top: 4px; }
    .tools .panel h3 { height: 36px; }
    .lock { min-height: 209px; }
    .lock label { display: flex; align-items: center; gap: 5px; padding: 6px 3px; }
    .tick { appearance: none; box-sizing: border-box; width: 13px; height: 13px; margin: 0; border: 1px solid #b5b5b5; border-radius: 1px; background: #f6f6f6; display: flex; align-items: center; justify-content: center; }
    .tick:checked::after { content: ""; flex: none; width: 11px; height: 4px; border: solid #555; border-width: 0 0 2px 2px; transform: translate(1px, -2px) rotate(-45deg); }
    .arrange { padding: 2px; }
    .tile { width: 62px; height: 62px; border-radius: 3px; background: #add2ee; display: flex; align-items: center; justify-content: center; }
    .dialog { position: absolute; top: 22px; bottom: 0; left: round(up, calc(50% - 250px), 1px); width: 500px; box-sizing: border-box; display: flex; flex-direction: column; border: 5px solid #008751; border-top: 0; border-radius: 4px; background: #fff; box-shadow: 0 0 8px #00000080; }
    .dialog header { position: relative; display: flex; align-items: center; justify-content: flex-end; height: 36px; padding-right: 5px; background: #008751; flex: none; }
    .ring { position: absolute; right: -19px; top: -6px; }
    .scroll { flex: 1; min-height: 0; display: flex; padding-right: 6px; }
    .text { flex: 1; min-width: 0; overflow: hidden; padding-left: 6px; }
    .text p { margin: 0 0 17px; }
    .text .tail { margin: -13px 0 19px; }
    .track { width: 17px; background: #f0f0f0; display: flex; flex-direction: column; align-items: center; flex: none; }
    .track svg { margin: 9px 0 57px; flex: none; }
    .thumb { flex: 1; width: 13px; background: #c1c1c1; }
  `];

  render() {
    return html`
      <div class="viewer">
        <aside class="side">
          <nav class="tabs"><button class="current">Contents</button><button>Legend</button><button>Help</button></nav>
          <div class="filter">
            <label class="pick"><select aria-label="Dataset filter"><option>All</option></select><svg width="9" height="5" viewBox="0 0 9 5" aria-hidden="true"><path d="M0 0h9L4.500 5z" fill="#ccc"/></svg></label>
            <button class="outline partner">Explore Partner Datasets</button>
            <button class="outline" aria-label="Add"><svg width="14" height="14" viewBox="0 0 14 14"><circle cx="7" cy="7" r="7" fill="#b8d7ef"/><path d="M7 3.500v7M3.500 7h7" stroke="#fff" stroke-width="2"/></svg></button>
            <button class="outline" aria-label="Add service"><svg width="16" height="16" viewBox="0 0 16 16" fill="none" stroke="#b8d7ef"><circle cx="8" cy="8" r="7"/><ellipse cx="8" cy="8" rx="3.500" ry="7"/><path d="M1 8h14M2 4.500h12M2 11.500h12"/><path d="M8 4v8M4 8h8" stroke="#b0b0b0" stroke-width="2"/></svg></button>
          </div>
          <h2 class="band">Dataset (Double click to open)</h2>
          <layer-tree .nodes=${datasets}></layer-tree>
          <h2 class="band">Layers</h2>
          <layer-tree .nodes=${active}></layer-tree>
        </aside>
        <div class="split"></div>
        <section class="window">
          <header><span>All Annual NLCD Land Cover (2023)</span>${round("up", "Collapse")}${round("resize", "Resize")}${round("close", "Close map")}</header>
          <div class="tools-row">
            <button class="outline date" aria-label="Calendar"><svg width="16" height="16" viewBox="0 0 16 16" fill="none" stroke="#b8d7ef"><path d="M.5 3.500h15v12H.5zM.5 7h15M.5 10h15M.5 13h15M4.200 7v8.500M8 7v8.500M11.800 7v8.500"/><path d="M.5 5h15" stroke-width="3"/><path d="M4 1v3M12 1v3" stroke-width="2.500"/></svg></button>
            <button class="outline" aria-label="Legend list"><svg width="16" height="14" viewBox="0 0 16 14"><path d="M0 2h3M5 2h11M0 7h3M5 7h11M0 12h3M5 12h11" stroke="#b8d7ef" stroke-width="2.400"/></svg></button>
          </div>
          <div class="cover">${map}</div>
        </section>
        <div class="split"><div class="grip"><svg width="4" height="8" viewBox="0 0 4 8" aria-hidden="true"><path d="M0 0l4 4-4 4z" fill="#a5d0c0"/></svg></div></div>
        <aside class="tools">
          <h2>Tools ${round("right", "Collapse tools")}</h2>
          <div class="stack">
            <h3><span>Data Download</span>${round("down", "Expand Data Download")}</h3>
            <h3><span>Feature Info</span>${round("help", "Feature Info help")}${round("down", "Expand Feature Info")}</h3>
            <section class="panel">
              <h3><span>Spatial Locking Tool</span>${round("help", "Spatial Locking help")}${round("up", "Collapse Spatial Locking")}</h3>
              <div class="box lock"><label><input class="tick" type="checkbox" checked>All Annual NLCD Land Cover (2023)</label></div>
            </section>
            <section class="panel">
              <h3><span>Arrange Windows Tool</span>${round("help", "Arrange Windows help")}${round("up", "Collapse Arrange Windows")}</h3>
              <div class="box arrange"><button class="tile" aria-label="Cascade windows"><svg width="46" height="46" viewBox="0 0 46 46" fill="none" stroke="#157fcc"><path d="M.5.5h45v45H.5zM2.500 45V4.500h41V45"/></svg></button></div>
            </section>
          </div>
        </aside>
      </div>
      <section class="dialog" role="dialog" aria-label="New features">
        <header>${round("close", "Close")}<svg class="ring" width="63" height="50" viewBox="0 0 63 50" aria-hidden="true"><ellipse cx="31.500" cy="25" rx="29" ry="22.500" fill="none" stroke="#000" stroke-width="4.500"/></svg></header>
        <div class="scroll">
          <div class="text">
            <p class="tail"><b>1)</b></p>
            <p>Three new ways to get your land cover products using the Data Download Tool! In addition to drawing a simple rectangle on the map to define your download area extent, now you can:</p>
            <p>- Draw a custom polygon right on the map<br>- Upload a shapefile that specifies your area<br>- Enter a GeoJSON string to define the extent</p>
            <p><b>2) New Graphing Tool:</b></p>
            <p>A graphing tool which plots a yearly Land Cover zonal histogram by class across counties.</p>
            <p>Take a look at the new tutorials under the Help tab for additional information.</p>
            <zonal-plot></zonal-plot>
          </div>
          <div class="track"><svg width="7" height="4" viewBox="0 0 7 4" aria-hidden="true"><path d="M0 4 3.500 0 7 4z" fill="#505050"/></svg><div class="thumb"></div></div>
        </div>
      </section>`;
  }
}

@customElement("app-root")
export class AppRoot extends LitElement {
  static styles = css`
    :host { display: flex; flex-direction: column; height: 100vh; box-sizing: border-box; border-left: 2px solid #eee; position: relative; overflow: hidden; font: 12px/16px "Open Sans", "Segoe UI", sans-serif; color: #333; background: #f7f7f7; }
    button { font: inherit; color: inherit; background: none; border: 0; padding: 0; margin: 0; display: flex; align-items: center; justify-content: center; flex: none; }
    .chrome { background: #ef3939; color: #fff; border-bottom: 1px solid #d93333; }
    .menu { display: flex; align-items: center; height: 34px; font-size: 11px; font-weight: 500; }
    .logo { margin: 0 8px 10px 6px; }
    .items { display: flex; gap: 21px; margin: 0 0 10px 8px; }
    .title { flex: 1; text-align: center; margin: 0 0 10px 22px; }
    .win { width: 46px; height: 32px; }
    .tabs { display: flex; align-items: center; gap: 3px; padding: 0 0 5px 3px; }
    .tab { box-sizing: border-box; height: 30px; border-radius: 15px; background: #f5504f; padding: 0 2px 0 7px; justify-content: flex-start; gap: 5px; flex: 0 1 177px; min-width: 0; }
    .tab span { flex: 1; text-align: left; white-space: nowrap; overflow: hidden; mask-image: linear-gradient(90deg, #000 90%, transparent); }
    .tab svg { flex: none; }
    .active { background: #f7f7f7; color: #444; box-shadow: 0 1px 2px #0003; }
    .new { width: 24px; height: 30px; color: #ffb3b3; margin-right: auto; }
    .faint { color: #f99; width: 32px; }
    .address { display: flex; align-items: center; height: 40px; border-bottom: 1px solid #ddd; padding-left: 1px; color: #333; }
    .nav { width: 37px; height: 37px; }
    .off { color: #999; }
    .field { display: flex; align-items: center; height: 28px; border-radius: 14px; background: #fff; box-shadow: 0 0 2px #0002; }
    .url { flex: 1; margin: 0 6px 0 5px; padding: 0 6px; gap: 10px; }
    .url .text { flex: 1; color: #888; margin-left: -3px; }
    .url b { font-weight: 400; color: #222; }
    .search { width: 200px; padding: 0 7px; box-sizing: border-box; gap: 6px; }
    .search input { font: 12px "Open Sans", sans-serif; border: 0; outline: 0; padding: 0; background: none; min-width: 0; flex: 1; }
    .search input::placeholder { color: #777; opacity: 1; }
    .profile { margin: 0 11px 0 8px; }
    .vpn { box-sizing: border-box; width: 28px; height: 16px; border: 1px solid #333; border-radius: 4px; font-size: 9px; font-weight: 700; margin-right: 6px; }
    .restart { gap: 6px; margin-right: 19px; }
    .gift { margin-right: 9px; }
    .main { flex: 1; display: flex; min-height: 0; }
    .rail { width: 40px; box-sizing: content-box; border-right: 1px solid #d8d8d8; display: flex; flex-direction: column; background: linear-gradient(#efeff6, #f7f7f7 60%); padding-top: 4px; overflow: hidden; }
    .rail button { width: 40px; height: 37px; }
    .rail .prefs { margin-top: auto; height: 34px; }
    mrlc-viewer { flex: 1; min-width: 0; }
    .status { display: flex; align-items: center; height: 34px; border-top: 1px solid #ddd; padding: 0 12px 0 2px; }
    .status button { width: 36px; height: 34px; }
    .status .reset { width: auto; font-size: 11px; color: #999; margin: 0 11px 0 8px; }
    .push { margin-left: auto; }
    .zoom { appearance: none; width: 129px; height: 16px; margin: 0 5px 0 0; background: linear-gradient(#777, #777) center / 100% 4px no-repeat; }
    .zoom::-webkit-slider-thumb { appearance: none; width: 16px; height: 16px; border-radius: 8px; border: 1px solid #555; background: #fff; }
    .clock { margin-left: 15px; }
    .hint { position: absolute; top: 0; left: 501px; width: 241px; height: 1px; background: linear-gradient(90deg, #0078d4 48px, #ddd 48px); }
  `;

  render() {
    return html`
      <div class="hint"></div>
      <header class="chrome">
        <div class="menu">
          <svg class="logo" width="16" height="16" viewBox="0 0 16 16" aria-hidden="true"><rect x="1" y="1" width="14" height="14" rx="4" fill="#fbd0d0"/><path d="M5 5.500 8 10.500 11 5.500" fill="none" stroke="#ef3939" stroke-width="2.200" stroke-linecap="round" stroke-linejoin="round"/></svg>
          <nav class="items">${["Arquivo", "Editar", "Exibir", "Marcadores", "Ferramentas", "Janela", "Ajuda"].map((m) => html`<button>${m}</button>`)}</nav>
          <span class="title">MRLC Viewer</span>
          <button class="win" aria-label="Minimizar"><svg width="10" height="10" viewBox="0 0 10 10" stroke="#fff"><path d="M0 5.500h10"/></svg></button>
          <button class="win" aria-label="Restaurar"><svg width="11" height="11" viewBox="0 0 11 11" fill="none" stroke="#fff"><rect x=".5" y="2.500" width="8" height="8" rx="1"/><path d="M3 .5h5.500q2 0 2 2V8"/></svg></button>
          <button class="win" aria-label="Fechar"><svg width="10" height="10" viewBox="0 0 10 10" stroke="#fff"><path d="m0 0 10 10M10 0 0 10"/></svg></button>
        </div>
        <div class="tabs">
          ${tabs.map((t) => html`<button class=${classMap({ tab: true, active: !!t.active })}><svg width="16" height="16" viewBox="0 0 16 16" aria-hidden="true">${t.icon}</svg><span>${t.title}</span></button>`)}
          <button class="new" aria-label="Nova aba"><svg width="12" height="12" viewBox="0 0 12 12" stroke="currentColor" stroke-width="1.300"><path d="M6 0v12M0 6h12"/></svg></button>
          <button class="faint" aria-label="Abas na nuvem">${stroke(cloud)}</button>
          <button class="faint" aria-label="Abas fechadas">${stroke(svg`<path d="M3 4.500h14M7 4V2.500h6V4M4.500 4.500l.7 11q.2 2.500 2.500 2.500h4.600q2.300 0 2.500-2.500l.7-11M8 8v6M12 8v6"/>`)}</button>
        </div>
      </header>
      <div class="address">
        <button class="nav off" aria-label="Voltar">${stroke(svg`<path d="M18.500 10H1.500M7 4.500 1.500 10 7 15.500"/>`)}</button>
        <button class="nav off" aria-label="Avançar">${stroke(svg`<path d="M1.500 10h17M13 4.500l5.500 5.500-5.500 5.500"/>`)}</button>
        <button class="nav off" aria-label="Retroceder">${stroke(svg`<path d="M1.500 3.500v13M18.500 10H6M10.500 5.500 6 10l4.500 4.500"/>`)}</button>
        <button class="nav off" aria-label="Avanço rápido">${stroke(svg`<path d="M18.500 3.500v13M1.500 10H14M9.500 5.500 14 10l-4.500 4.500"/>`)}</button>
        <button class="nav" aria-label="Recarregar">${stroke(svg`<path stroke-width="1.500" d="M7 3.300A7.400 7.400 0 0 0 6 16.200M3 16.500h3.400V13.200M9.500 2.600A7.400 7.400 0 0 1 17.300 11M13 16.700A7.400 7.400 0 0 0 14 3.800M17 3.500h-3.400V6.800"/>`)}</button>
        <button class="nav" aria-label="Página inicial">${stroke(svg`<path d="M8.500 2.200q1.500-1 3 0l6 4.500q1 .8.700 2l-1.700 7q-.5 2-2.500 2H6q-2 0-2.500-2l-1.700-7q-.3-1.200.7-2zM7.500 14h5"/>`)}</button>
        <div class="field url">
          ${stroke(svg`<path d="M8 1.500 14 3.500V8q0 4.500-6 7Q2 12.500 2 8V3.500z"/><path fill="currentColor" stroke-width=".6" d="M9 4.500 5.500 8.800h2L7 12l3.500-4.300h-2z"/>`, 16, 16)}
          ${stroke(svg`<rect x="3" y="7" width="10" height="7" rx="1"/><path d="M5 7V4.500a3 3 0 0 1 6 0V7"/>`, 16, 16)}
          <span class="text">www.<b>mrlc.gov</b>/viewer/</span>
          <button aria-label="Traduzir">${stroke(svg`<path stroke-width="1.700" d="m2 13.500 3-7 3 7M3 11h4"/><path d="M8 4h6.500M11.200 2.500V4M13.500 4q-1 3.500-5 5M9 4.500q1.500 3 5 4.500"/>`, 16, 16)}</button>
          <button aria-label="Criar favorito">${stroke(svg`<path d="M4.500 2h7v12L8 10.800 4.500 14z"/>`, 16, 16)}</button>
        </div>
        <label class="field search">
          <svg width="15" height="14" viewBox="0 0 15 14" fill="none" stroke="#222" aria-hidden="true"><circle cx="5" cy="6" r="3.800" stroke-width="2"/><path d="m7.800 9 3.200 3.500" stroke-width="2.500"/><path d="M10.500 4.500h4.500L12.700 7z" fill="#222" stroke="none"/></svg>
          <input type="text" aria-label="Pesquisar" placeholder="Pesquisar com Google">
        </label>
        <button class="profile" aria-label="Perfil"><svg width="24" height="24" viewBox="0 0 24 24"><circle cx="12" cy="12" r="12" fill="#666"/><path d="M12 4a5.500 6 0 0 1 3.500 10.500q1 2 5.800 3.500Q18 24 12 24T2.700 18q4.800-1.500 5.800-3.500A5.500 6 0 0 1 12 4z" fill="#fff"/></svg></button>
        <button class="vpn">VPN</button>
        <button class="restart"><svg width="28" height="28" viewBox="0 0 28 28" aria-hidden="true"><circle cx="14" cy="14" r="14" fill="#0460de"/><path d="M14 8v6M11 9.500a6 6 0 1 0 6 0" fill="none" stroke="#fff" stroke-width="1.300"/></svg>Reinício necessário</button>
        <button class="gift" aria-label="Novidades"><svg width="22" height="22" viewBox="0 0 22 22"><rect width="22" height="22" rx="5" fill="#2e2e2e"/><path d="M4 8h14v3H4zM5.500 11v7h11v-7M11 8v10M11 8Q6 7.500 7 5t4 3q3-5.500 4-3t-4 3" fill="none" stroke="#fff" stroke-width="1.300"/></svg></button>
      </div>
      <div class="main">
        <nav class="rail">${railIcons.map(([label, icon]) => html`<button aria-label=${label}>${icon}</button>`)}<button class="prefs" aria-label="Configurações">${stroke(gear)}</button></nav>
        <mrlc-viewer></mrlc-viewer>
      </div>
      <footer class="status">
        <button aria-label="Configurações">${stroke(gear)}</button>
        <button aria-label="Painéis">${stroke(svg`<rect x="2" y="2" width="4" height="12" rx="1"/><rect x="10" y="2" width="4" height="12" rx="1"/>`, 16, 16)}</button>
        <button aria-label="Sincronização">${stroke(cloud)}</button>
        <button class="push" aria-label="Capturar">${stroke(svg`<circle cx="10" cy="10" r="3"/><path d="M2.500 7V6q0-3.500 3.500-3.500h1M13 2.500h1q3.500 0 3.500 3.500v1M17.500 13v1q0 3.500-3.500 3.500h-1M7 17.500H6q-3.500 0-3.500-3.500v-1"/>`)}</button>
        <button aria-label="Lado a lado">${stroke(svg`<path d="M7.500 3H5Q1 3 1 7v6q0 4 4 4h2.500M12.500 3H15q4 0 4 4v6q0 4-4 4h-2.500"/><path stroke="#999" stroke-dasharray="2 2" d="M10 0v20"/>`)}</button>
        <button aria-label="Ações da página">${stroke(svg`<path d="M7 17.500Q3 17 3 13V8q0-6 5-6h3q4.500 0 4.500 4v5M3.500 8.500H7q1.500 0 1.500-1.500V2.500M12 13l-2.500 2.500L12 18M16 13l2.500 2.500L16 18"/>`)}</button>
        <button class="reset">Reiniciar</button>
        <input class="zoom" type="range" min="20" max="500" .value=${"100"} aria-label="Zoom da página">
        <span>100 %</span>
        <span class="clock">4:21 PM</span>
      </footer>`;
  }
}
